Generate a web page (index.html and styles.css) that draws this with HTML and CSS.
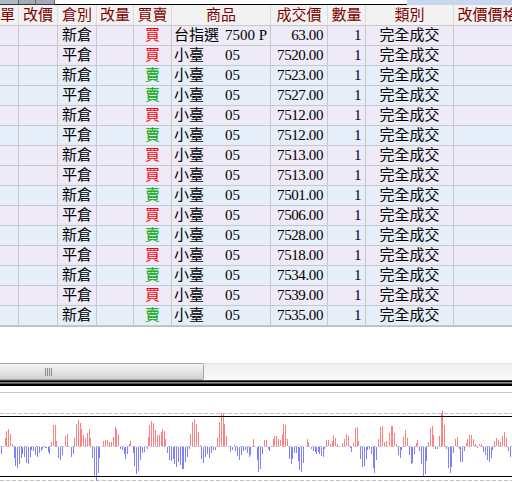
FILE: index.html
```html
<!DOCTYPE html>
<html lang="zh-Hant">
<head>
<meta charset="utf-8">
<title>成交回報</title>
<link rel="stylesheet" href="styles.css">
</head>
<body>
<div class="topstrip">
  <div class="tb tb1"></div><div class="tb tb2"></div><div class="tb tb3"></div>
  <div class="tabwhite"></div>
  <div class="tabrest"></div>
</div>
<div class="grid">
  <div class="row head">
    <div class="c r0">單</div><div class="c">改價</div><div class="c">倉別</div><div class="c">改量</div><div class="c">買賣</div><div class="c">商品</div><div class="c">成交價</div><div class="c">數量</div><div class="c">類別</div><div class="c">改價價格</div>
  </div>
  <div class="row buy"><div class="c"></div><div class="c"></div><div class="c">新倉</div><div class="c"></div><div class="c b">買</div><div class="c p"><span class="pn">台指選</span>7500 P</div><div class="c n">63.00</div><div class="c n">1</div><div class="c">完全成交</div><div class="c"></div></div>
  <div class="row buy"><div class="c"></div><div class="c"></div><div class="c">平倉</div><div class="c"></div><div class="c b">買</div><div class="c p"><span class="pn">小臺</span>05</div><div class="c n">7520.00</div><div class="c n">1</div><div class="c">完全成交</div><div class="c"></div></div>
  <div class="row sell"><div class="c"></div><div class="c"></div><div class="c">新倉</div><div class="c"></div><div class="c s">賣</div><div class="c p"><span class="pn">小臺</span>05</div><div class="c n">7523.00</div><div class="c n">1</div><div class="c">完全成交</div><div class="c"></div></div>
  <div class="row sell"><div class="c"></div><div class="c"></div><div class="c">平倉</div><div class="c"></div><div class="c s">賣</div><div class="c p"><span class="pn">小臺</span>05</div><div class="c n">7527.00</div><div class="c n">1</div><div class="c">完全成交</div><div class="c"></div></div>
  <div class="row buy"><div class="c"></div><div class="c"></div><div class="c">新倉</div><div class="c"></div><div class="c b">買</div><div class="c p"><span class="pn">小臺</span>05</div><div class="c n">7512.00</div><div class="c n">1</div><div class="c">完全成交</div><div class="c"></div></div>
  <div class="row sell"><div class="c"></div><div class="c"></div><div class="c">平倉</div><div class="c"></div><div class="c s">賣</div><div class="c p"><span class="pn">小臺</span>05</div><div class="c n">7512.00</div><div class="c n">1</div><div class="c">完全成交</div><div class="c"></div></div>
  <div class="row buy"><div class="c"></div><div class="c"></div><div class="c">新倉</div><div class="c"></div><div class="c b">買</div><div class="c p"><span class="pn">小臺</span>05</div><div class="c n">7513.00</div><div class="c n">1</div><div class="c">完全成交</div><div class="c"></div></div>
  <div class="row buy"><div class="c"></div><div class="c"></div><div class="c">平倉</div><div class="c"></div><div class="c b">買</div><div class="c p"><span class="pn">小臺</span>05</div><div class="c n">7513.00</div><div class="c n">1</div><div class="c">完全成交</div><div class="c"></div></div>
  <div class="row sell"><div class="c"></div><div class="c"></div><div class="c">新倉</div><div class="c"></div><div class="c s">賣</div><div class="c p"><span class="pn">小臺</span>05</div><div class="c n">7501.00</div><div class="c n">1</div><div class="c">完全成交</div><div class="c"></div></div>
  <div class="row buy"><div class="c"></div><div class="c"></div><div class="c">平倉</div><div class="c"></div><div class="c b">買</div><div class="c p"><span class="pn">小臺</span>05</div><div class="c n">7506.00</div><div class="c n">1</div><div class="c">完全成交</div><div class="c"></div></div>
  <div class="row sell"><div class="c"></div><div class="c"></div><div class="c">新倉</div><div class="c"></div><div class="c s">賣</div><div class="c p"><span class="pn">小臺</span>05</div><div class="c n">7528.00</div><div class="c n">1</div><div class="c">完全成交</div><div class="c"></div></div>
  <div class="row buy"><div class="c"></div><div class="c"></div><div class="c">平倉</div><div class="c"></div><div class="c b">買</div><div class="c p"><span class="pn">小臺</span>05</div><div class="c n">7518.00</div><div class="c n">1</div><div class="c">完全成交</div><div class="c"></div></div>
  <div class="row sell"><div class="c"></div><div class="c"></div><div class="c">新倉</div><div class="c"></div><div class="c s">賣</div><div class="c p"><span class="pn">小臺</span>05</div><div class="c n">7534.00</div><div class="c n">1</div><div class="c">完全成交</div><div class="c"></div></div>
  <div class="row buy"><div class="c"></div><div class="c"></div><div class="c">平倉</div><div class="c"></div><div class="c b">買</div><div class="c p"><span class="pn">小臺</span>05</div><div class="c n">7539.00</div><div class="c n">1</div><div class="c">完全成交</div><div class="c"></div></div>
  <div class="row sell"><div class="c"></div><div class="c"></div><div class="c">新倉</div><div class="c"></div><div class="c s">賣</div><div class="c p"><span class="pn">小臺</span>05</div><div class="c n">7535.00</div><div class="c n">1</div><div class="c">完全成交</div><div class="c"></div></div>
</div>
<div class="hscroll">
  <div class="thumb"><span class="grip"></span></div>
  <div class="track"></div>
</div>
<div class="split"></div>
<div class="chart">
  <svg width="512" height="89" viewBox="0 0 512 89" shape-rendering="crispEdges">
    <line x1="0" y1="20.5" x2="512" y2="20.5" stroke="#c4c4c4" stroke-dasharray="4 2"/>
    <line x1="0" y1="87.5" x2="512" y2="87.5" stroke="#c4c4c4" stroke-dasharray="4 2"/>
    <line x1="0" y1="53.5" x2="512" y2="53.5" stroke="#c4c4c4" stroke-dasharray="4 2"/>
    <path stroke="#ff8080" stroke-width="1" fill="none" d="M5.5 53v-8M6.5 53v-15M8.5 53v-17M10.5 53v-12M12.5 53v-2M51.5 53v-4M53.5 53v-21M55.5 53v-21M56.5 53v-5M65.5 53v-10M67.5 53v-12M74.5 53v-8M76.5 53v-22M78.5 53v-26M80.5 53v-23M81.5 53v-17M83.5 53v-11M85.5 53v-8M87.5 53v-13M89.5 53v-17M90.5 53v-8M103.5 53v-5M105.5 53v-6M107.5 53v-6M109.5 53v-4M111.5 53v-4M113.5 53v-9M115.5 53v-19M116.5 53v-17M118.5 53v-12M129.5 53v-2M130.5 53v-5M148.5 53v-9M149.5 53v-21M151.5 53v-25M153.5 53v-23M155.5 53v-16M157.5 53v-11M159.5 53v-11M161.5 53v-14M162.5 53v-17M164.5 53v-15M165.5 53v-7M190.5 53v-12M192.5 53v-24M194.5 53v-27M196.5 53v-22M198.5 53v-14M200.5 53v-1M217.5 53v-8M219.5 53v-24M221.5 53v-33M223.5 53v-32M224.5 53v-22M226.5 53v-10M234.5 53v-1M253.5 53v-7M264.5 53v-6M266.5 53v-6M273.5 53v-7M274.5 53v-10M276.5 53v-10M278.5 53v-7M280.5 53v-6M282.5 53v-12M283.5 53v-22M285.5 53v-21M287.5 53v-7M307.5 53v-7M308.5 53v-4M326.5 53v-6M328.5 53v-6M330.5 53v-2M332.5 53v-5M333.5 53v-11M335.5 53v-8M337.5 53v-2M342.5 53v-3M344.5 53v-7M346.5 53v-12M348.5 53v-10M353.5 53v-3M355.5 53v-18M357.5 53v-19M358.5 53v-5M378.5 53v-7M380.5 53v-19M382.5 53v-20M384.5 53v-4M386.5 53v-5M389.5 53v-13M391.5 53v-20M392.5 53v-20M394.5 53v-13M396.5 53v-2M403.5 53v-9M405.5 53v-16M407.5 53v-8M416.5 53v-3M417.5 53v-6M428.5 53v-4M430.5 53v-18M432.5 53v-20M433.5 53v-11M439.5 53v-10M441.5 53v-33M442.5 53v-35M444.5 53v-21M455.5 53v-7M457.5 53v-9M466.5 53v-3M467.5 53v-7M469.5 53v-11M471.5 53v-11M473.5 53v-7M475.5 53v-2M479.5 53v-2M481.5 53v-2M494.5 53v-5M496.5 53v-8M498.5 53v-6M500.5 53v-4M502.5 53v-10M504.5 53v-14M506.5 53v-8"/>
    <path stroke="#8080ff" stroke-width="1" fill="none" d="M1.5 54v7M14.5 54v11M15.5 54v19M17.5 54v21M19.5 54v17M21.5 54v11M22.5 54v7M24.5 54v10M26.5 54v16M28.5 54v17M30.5 54v10M31.5 54v3M33.5 54v4M35.5 54v8M37.5 54v10M39.5 54v6M41.5 54v4M42.5 54v2M45.5 54v1M46.5 54v1M48.5 54v5M49.5 54v7M58.5 54v11M60.5 54v13M62.5 54v8M71.5 54v10M73.5 54v7M92.5 54v11M94.5 54v29M96.5 54v34M98.5 54v26M99.5 54v11M120.5 54v2M122.5 54v3M124.5 54v7M125.5 54v12M127.5 54v7M133.5 54v6M134.5 54v19M136.5 54v27M138.5 54v24M140.5 54v13M142.5 54v6M144.5 54v5M147.5 54v2M167.5 54v6M169.5 54v13M171.5 54v14M173.5 54v12M174.5 54v17M176.5 54v20M178.5 54v15M180.5 54v18M182.5 54v22M183.5 54v22M185.5 54v15M187.5 54v10M189.5 54v2M201.5 54v12M203.5 54v16M205.5 54v10M207.5 54v7M209.5 54v11M211.5 54v6M213.5 54v3M215.5 54v3M230.5 54v5M232.5 54v3M235.5 54v4M237.5 54v9M239.5 54v13M241.5 54v8M243.5 54v4M245.5 54v3M247.5 54v6M249.5 54v10M250.5 54v8M257.5 54v13M258.5 54v25M260.5 54v22M262.5 54v7M268.5 54v2M269.5 54v4M289.5 54v12M291.5 54v17M292.5 54v12M294.5 54v6M296.5 54v6M298.5 54v14M299.5 54v23M301.5 54v25M303.5 54v16M311.5 54v2M313.5 54v4M315.5 54v5M316.5 54v7M318.5 54v5M319.5 54v7M321.5 54v9M323.5 54v10M324.5 54v2M350.5 54v1M351.5 54v5M360.5 54v12M362.5 54v20M364.5 54v19M366.5 54v12M367.5 54v3M369.5 54v2M371.5 54v7M373.5 54v21M374.5 54v26M376.5 54v13M398.5 54v8M400.5 54v11M401.5 54v3M409.5 54v8M411.5 54v17M412.5 54v16M414.5 54v7M419.5 54v4M421.5 54v17M423.5 54v29M425.5 54v27M426.5 54v14M435.5 54v2M437.5 54v2M446.5 54v2M448.5 54v21M450.5 54v26M451.5 54v20M453.5 54v6M459.5 54v2M460.5 54v15M462.5 54v15M464.5 54v4M477.5 54v1M483.5 54v5M485.5 54v8M487.5 54v13M489.5 54v15M491.5 54v11M492.5 54v3M508.5 54v4M510.5 54v10"/>
    <line x1="0" y1="23.5" x2="512" y2="23.5" stroke="#000"/>
    <line x1="0" y1="83.5" x2="512" y2="83.5" stroke="#000"/>
  </svg>
</div>
</body>
</html>
```
FILE: styles.css
```css
html, body {
  margin: 0;
  padding: 0;
}
body {
  width: 512px;
  height: 482px;
  overflow: hidden;
  background: #ffffff;
  font-family: "Liberation Serif", "Noto Sans CJK TC", serif;
  font-size: 15px;
  color: #000;
}

/* top tab strip */
.topstrip {
  display: flex;
  height: 5px;
  background: #c9d8ee;
}
.tb {
  height: 4px;
  background: #a4abb6;
  border-right: 1px solid #5c6068;
  border-bottom: 1px solid #30343a;
}
.tb1 { width: 18px; background: #b0b6be; }
.tb2 { width: 16px; }
.tb3 { width: 18px; }
.tabwhite {
  width: 352px;
  height: 4px;
  background: #ffffff;
  border-bottom: 1px solid #000;
}
.tabrest { flex: 1; }

/* grid */
.grid {
  overflow: hidden;
  border-bottom: 1px solid #c0c0c0;
}
.row {
  display: grid;
  grid-template-columns: 19px 39px 39px 37px 38px 99px 57px 38px 88px 68px;
  width: 522px;
  height: 20px;
  box-sizing: border-box;
  border-bottom: 1px solid #c8c8c8;
}
.head {
  height: 21px;
  background: #f2f2f2;
  color: #800000;
}
.head .c {
  line-height: 20px;
  border-right-color: #dcdcdc;
}
.buy { background: #efeaf7; }
.sell { background: #e6eef9; }
.c {
  border-right: 1px solid #c8c8c8;
  line-height: 19px;
  white-space: nowrap;
  overflow: hidden;
  text-align: center;
}
.r0 {
  text-align: right;
  padding-right: 3px;
}
.n {
  text-align: right;
  padding-right: 4px;
  letter-spacing: -0.4px;
}
.p {
  text-align: left;
  padding-left: 2px;
}
.pn {
  display: inline-block;
  width: 51px;
}
.b { color: #ff0000; }
.s { color: #00a800; }

/* horizontal scrollbar */
.hscroll {
  display: flex;
  height: 17px;
  margin-top: 36px;
}
.thumb {
  position: relative;
  width: 204px;
  box-sizing: border-box;
  border: 1px solid #a8a8a8;
  border-left: none;
  border-radius: 0 2px 2px 0;
  background: linear-gradient(#f7f7f7, #e4e4e4 50%, #d2d2d2);
}
.grip {
  position: absolute;
  left: 45px;
  top: 4px;
  width: 7px;
  height: 8px;
  background: repeating-linear-gradient(to right, #8c8c8c 0 1px, transparent 1px 2px);
}
.track {
  flex: 1;
  border-top: 1px solid #e2e2e2;
  background: linear-gradient(#eeeeee, #fafafa);
}

/* splitter */
.split {
  height: 6px;
  margin-bottom: 6px;
  background: linear-gradient(to bottom,
    #4a4a4a 0 1px, #000 1px 2px, #8a8a8a 2px 3px,
    #555 3px 4px, #000 4px 6px);
}

/* chart */
.chart {
  border-top: 1px solid #c8c8c8;
  height: 89px;
}
.chart svg { display: block; }
```
